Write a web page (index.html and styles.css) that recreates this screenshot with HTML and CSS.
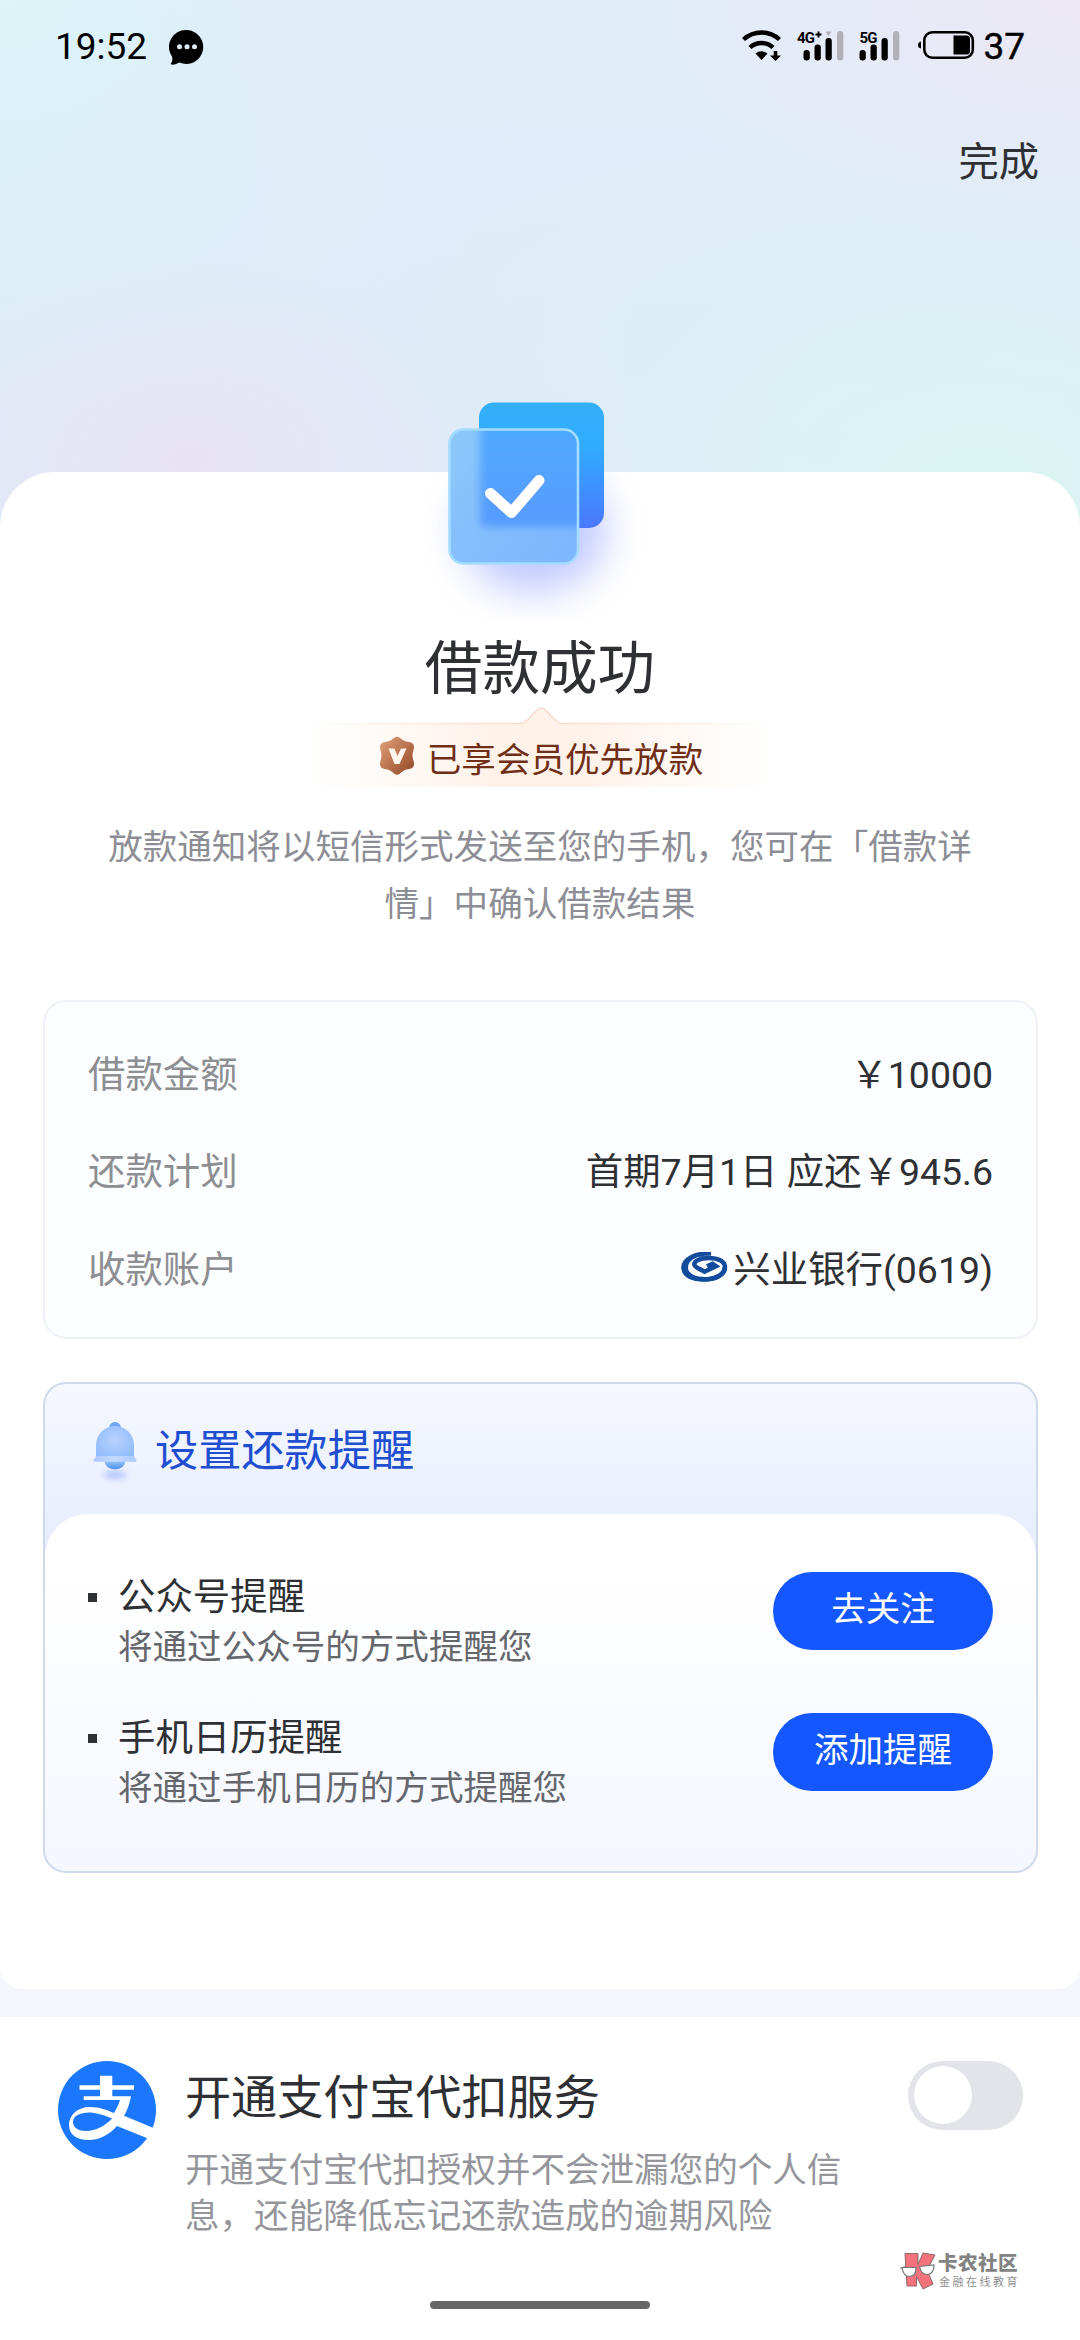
FILE: index.html
```html
<!DOCTYPE html>
<html lang="zh-CN">
<head>
<meta charset="utf-8">
<title>借款成功</title>
<link rel="stylesheet" href="styles.css">
</head>
<body>
<div class="page">
  <header class="status">
    <div class="status-left">
      <span>19:52</span>
      <svg class="chat" width="36" height="37" viewBox="0 0 36 37">
        <path d="M18 1a17 17 0 1 1-7.500 32.600C8 35 4.500 36 2.500 35.500c-.8-.2-.9-1-.4-1.500 1.400-1.500 1.600-4 .9-6.500A17 17 0 0 1 18 1z"/>
        <g fill="#e0edf7"><circle cx="10.500" cy="17.700" r="2.500"/><circle cx="18" cy="17.700" r="2.500"/><circle cx="25.500" cy="17.700" r="2.500"/></g>
      </svg>
    </div>
    <div class="status-right">
      <svg class="signals" width="235" height="34" viewBox="0 0 235 34">
        <g fill="none" stroke="#000" stroke-width="4.400">
          <path d="M1.500 9.500a26.500 26.500 0 0 1 36 0"/>
          <path d="M8 17.500a17 17 0 0 1 23 0"/>
        </g>
        <path d="M19.500 30l-6-6.500a9 9 0 0 1 12 0z"/>
        <path d="M31.700 21h3.600v4.500h3.700l-5.500 5.500-5.500-5.500h3.700z"/>
        <text x="55" y="12.500" class="net">4G</text><path d="M73.500 4.500h6M76.500 1.500v6" stroke="#000" stroke-width="1.900"/>
        <path d="M83.500 1.500h6l-3 4.500z" fill="#b0b0b9"/>
        <g><rect x="61.500" y="20" width="6.300" height="10.500" rx="3"/><rect x="72.500" y="14.500" width="6.300" height="16" rx="3"/><rect x="83.500" y="8" width="6.300" height="22.500" rx="3"/><rect x="95" y="1" width="6.300" height="29.500" rx="3" fill="#b0b0b9"/></g>
        <text x="117.500" y="12.500" class="net">5G</text>
        <g><rect x="117.500" y="20" width="6.300" height="10.500" rx="3"/><rect x="128.500" y="14.500" width="6.300" height="16" rx="3"/><rect x="139.500" y="8" width="6.300" height="22.500" rx="3"/><rect x="151" y="1" width="6.300" height="29.500" rx="3" fill="#b0b0b9"/></g>
        <path d="M179 11.500v7q-3-.5-3-3.500t3-3.500z"/>
        <rect x="182.300" y="2.300" width="48.500" height="25.400" rx="8" fill="none" stroke="#000" stroke-width="2.600"/>
        <path d="M211.500 5.500h13q3.500 0 3.500 3.500v12q0 3.500-3.500 3.500h-13z"/>
      </svg>
      <span class="battery">37</span>
    </div>
  </header>
  <nav class="nav"><a class="done">完成</a></nav>

  <main class="sheet">
    <svg class="hero" width="280" height="240" viewBox="0 0 280 240">
      <defs>
        <linearGradient id="back" x1="0" y1="0" x2="0" y2="1"><stop offset="0" stop-color="#35aff9"/><stop offset=".35" stop-color="#30acff"/><stop offset=".75" stop-color="#418bff"/><stop offset="1" stop-color="#4a78fc"/></linearGradient>
        <linearGradient id="front" x1="0" y1="0" x2="1" y2="1"><stop offset="0" stop-color="#8dc8fa"/><stop offset="1" stop-color="#7db5ff"/></linearGradient>
        <linearGradient id="mix" x1="0" y1="0" x2="0" y2="1"><stop offset="0" stop-color="#4eadff"/><stop offset="1" stop-color="#579bff"/></linearGradient>
        <filter id="soft" x="-50%" y="-50%" width="200%" height="200%"><feGaussianBlur stdDeviation="20"/></filter>
        <filter id="edge" x="-20%" y="-20%" width="140%" height="140%"><feGaussianBlur stdDeviation="4"/></filter>
        <clipPath id="pane"><rect x="49" y="49" width="129" height="134" rx="14"/></clipPath>
        <clipPath id="below"><rect x="0" y="92" width="280" height="148"/></clipPath>
      </defs>
      <g clip-path="url(#below)"><ellipse cx="134" cy="150" rx="72" ry="62" fill="#8c9cff" opacity=".55" filter="url(#soft)"/></g>
      <rect x="79" y="22.500" width="125" height="125.500" rx="15" fill="url(#back)"/>
      <rect x="49" y="49" width="129" height="134" rx="14" fill="url(#front)"/>
      <g clip-path="url(#pane)"><rect x="80" y="20" width="125" height="127" rx="6" fill="url(#mix)" filter="url(#edge)"/></g>
      <rect x="49.500" y="49.500" width="128.500" height="134" rx="14" fill="none" stroke="#a4dcff" stroke-width="2.600"/>
      <path d="M90.500 113.500l21 19 27.500-32" fill="none" stroke="#fff" stroke-width="11" stroke-linecap="round" stroke-linejoin="round"/>
    </svg>
    <h1 class="title">借款成功</h1>
    <div class="vip">
      <svg class="vip-bg" width="480" height="82" viewBox="0 0 480 82">
        <defs>
          <linearGradient id="vf" x1="0" x2="1"><stop offset="0" stop-color="#fff5ee" stop-opacity="0"/><stop offset=".4" stop-color="#fff2e9"/><stop offset=".6" stop-color="#fff2e9"/><stop offset="1" stop-color="#fff5ee" stop-opacity="0"/></linearGradient>
          <linearGradient id="vs" x1="0" x2="1"><stop offset="0" stop-color="#f7dfd0" stop-opacity="0"/><stop offset=".45" stop-color="#f7dccb"/><stop offset=".55" stop-color="#f7dccb"/><stop offset="1" stop-color="#f7dfd0" stop-opacity="0"/></linearGradient>
        </defs>
        <path d="M0 17.500H221C228 17.500 235 2 241.500 2S254 17.500 261 17.500H480V81H0z" fill="url(#vf)"/>
        <path d="M0 17.500H221C228 17.500 235 2 241.500 2S254 17.500 261 17.500H480" fill="none" stroke="url(#vs)" stroke-width="1.500"/>
      </svg>
      <svg class="vip-icon" width="36" height="40" viewBox="0 0 36 40">
        <defs><linearGradient id="bz" x1="0" y1="0" x2="1" y2="1"><stop offset="0" stop-color="#e3a27c"/><stop offset=".5" stop-color="#bb7450"/><stop offset="1" stop-color="#8e4524"/></linearGradient></defs>
        <path d="M15 2Q18-.5 21 2C24 4.500 26 5.500 30 6q4.500.5 5 4.500c.2 3-1.500 5.500-1.500 9s1.700 6 1.500 9q-.5 4-5 4.500c-4 .5-6 2-9 4.500q-3 2.500-6 0c-3-2.500-5-4-9-4.500q-4.500-.5-5-4.500c-.2-3 1.500-5.500 1.500-9S.8 13.500 1 10.500Q1.500 6.500 6 6c4-.5 6-1.500 9-4z" fill="url(#bz)"/>
        <path d="M9.500 12.500h6l3 7.500 3.500-7.500h5.500l-7 15.500h-5z" fill="#fff5ed"/>
      </svg>
      <span class="vip-text">已享会员优先放款</span>
    </div>
    <p class="desc">放款通知将以短信形式发送至您的手机，您可在「借款详情」中确认借款结果</p>

    <section class="details">
      <div class="row"><span class="label">借款金额</span><span class="value">￥10000</span></div>
      <div class="row"><span class="label">还款计划</span><span class="value">首期7月1日 应还￥945.6</span></div>
      <div class="row"><span class="label">收款账户</span><span class="value">
        <svg class="bank" width="47" height="31" viewBox="0 0 47 31">
          <path d="M30 1.200C14 1.200 2.600 7 2.600 15.500S12 27.500 23.500 27.500 44 22.500 44 15C44 9 36.500 5.900 28 5.900c-9 0-15.500 3.100-14.500 7.100.8 3 5.500 3.700 10 6.700L35 14.200l-3.500-2.400-5.500 2.400" fill="none" stroke="#134c9d" stroke-width="4.500"/>
          <path d="M30 0C14-.8.600 6 .600 15.500.600 23.500 10 29.500 23.500 29.500S46 23.500 46 15.500L41.500 15c0 6-8 10-18 10S7 21 7 15.500C7 8 17 3 30 1.500z" fill="#134c9d"/>
        </svg>兴业银行(0619)</span></div>
    </section>

    <section class="remind">
      <header class="remind-head">
        <svg class="bell" width="46" height="64" viewBox="0 0 46 64">
          <defs>
            <radialGradient id="bl" cx=".5" cy=".45" r=".65"><stop offset="0" stop-color="#b9d2fe"/><stop offset="1" stop-color="#8fbbfb"/></radialGradient>
            <linearGradient id="cl" x1="0" y1="0" x2="0" y2="1"><stop offset=".4" stop-color="#a9d0fb"/><stop offset="1" stop-color="#4a90ea"/></linearGradient>
            <linearGradient id="rim" x1="0" y1="0" x2="1" y2="0"><stop offset="0" stop-color="#a9c8fc"/><stop offset=".5" stop-color="#c6dafe"/><stop offset="1" stop-color="#a9c8fc"/></linearGradient>
            <filter id="bs" x="-50%" y="-100%" width="200%" height="300%"><feGaussianBlur stdDeviation="3"/></filter>
          </defs>
          <ellipse cx="23" cy="55" rx="12" ry="3.500" fill="#a9bdfd" filter="url(#bs)"/>
          <circle cx="23" cy="8" r="6" fill="#6fa5f3"/>
          <ellipse cx="23" cy="41" rx="10.500" ry="8.500" fill="url(#cl)"/>
          <path d="M4 25a19 19 0 0 1 38 0v13H4z" fill="url(#bl)"/>
          <path d="M4 36h38q.5 2.500 2.200 3.500 1 2-1.200 2.300H3Q.8 41.500 1.800 39.500 3.500 38.500 4 36z" fill="url(#rim)"/>
        </svg>
        <h2>设置还款提醒</h2>
      </header>
      <div class="remind-body">
        <div class="item">
          <i class="dot"></i>
          <div class="item-text"><h3>公众号提醒</h3><p>将通过公众号的方式提醒您</p></div>
          <button class="btn">去关注</button>
        </div>
        <div class="item">
          <i class="dot"></i>
          <div class="item-text"><h3>手机日历提醒</h3><p>将通过手机日历的方式提醒您</p></div>
          <button class="btn">添加提醒</button>
        </div>
      </div>
    </section>
  </main>

  <footer class="alipay">
    <svg class="alipay-logo" width="98" height="98" viewBox="0 0 98 98">
      <circle cx="49" cy="49" r="49" fill="#1b78fe"/>
      <path d="M42 14.700h12.300v9.600H76v4.400H54.300v6.500H73C71.500 43 69 50 66 54.700L95.500 67 90 77.500 59 65C50 75 40 79 31 79 18 79 11 73 11 64 11 54 20 46 32 46c9 0 17 3 24 6 3-5 5-9.500 6-13H25.700v-3.800H42v-6.500H21.500v-4.400H42zM54 57.500C46 54 37 51.500 31 51.500c-9 0-16 3.500-16 9.500S21 70 28 70c10 0 19-5 26-12.500z" fill="#fff" fill-rule="evenodd"/>
    </svg>
    <div class="alipay-text">
      <h2>开通支付宝代扣服务</h2>
      <p>开通支付宝代扣授权并不会泄漏您的个人信息，还能降低忘记还款造成的逾期风险</p>
    </div>
    <span class="switch"><i class="knob"></i></span>
  </footer>

  <div class="watermark">
    <svg width="36" height="38" viewBox="0 0 36 38">
      <g fill="#f4727c" stroke="#8a6a6c" stroke-width="1">
        <path d="M5 1.500h13v11L23 1l12 2-8 15 6 14-10 5-6.500-12.500V34H7z"/>
      </g>
      <g fill="#fff" stroke="#777" stroke-width="1.200"><path d="M2 15.500l14 0c0 6-2 9-6.500 9S3 21.500 2 15.500zM19.500 14.500L34 13c0 5.500-2 9-6.500 9.500-4.500 0-7-3-8-8z"/></g>
      <path d="M.5 16.500l5-2" stroke="#777" stroke-width="1.200"/>
    </svg>
    <div class="wm-text"><b>卡农社区</b><span>金融在线教育</span></div>
  </div>
  <div class="homebar"></div>
</div>
</body>
</html>
```

FILE: styles.css
```css
* { box-sizing: border-box; margin: 0; padding: 0; }

body {
  width: 1080px;
  font-family: Roboto, "Noto Sans CJK SC", sans-serif;
  color: #2e3033;
}

h1, h2, h3 { font-weight: 400; }
svg { display: block; flex: none; }

.page {
  position: relative;
  display: flex;
  flex-direction: column;
  height: 2340px;
  overflow: hidden;
  background:
    radial-gradient(ellipse 260px 180px at 0 0, #dcf5f8, rgba(220, 245, 248, 0)) 0 0 / 1080px 600px no-repeat,
    radial-gradient(ellipse 460px 250px at 100% 0, #ece8f4, rgba(236, 232, 244, 0)) 0 0 / 1080px 600px no-repeat,
    radial-gradient(ellipse 300px 200px at 190px 460px, #e8e3f4, rgba(232, 227, 244, 0)) 0 0 / 1080px 600px no-repeat,
    radial-gradient(ellipse 400px 240px at 980px 490px, #daf6f1, rgba(218, 246, 241, 0)) 0 0 / 1080px 600px no-repeat,
    radial-gradient(ellipse 420px 280px at 0 170px, #dbeff8, rgba(219, 239, 248, 0)) 0 0 / 1080px 600px no-repeat,
    radial-gradient(ellipse 560px 240px at 900px 350px, #dceff7, rgba(220, 239, 247, 0)) 0 0 / 1080px 600px no-repeat,
    linear-gradient(#e0edf9, #dfeaf8) 0 0 / 1080px 600px no-repeat,
    #f4f6fb;
}

.status {
  display: flex;
  justify-content: space-between;
  align-items: center;
  height: 92px;
  padding: 2px 55px 0 55px;
  font-size: 37px;
  line-height: 44px;
  color: #000;
}
.status-left, .status-right { display: flex; align-items: center; }
.chat { margin-left: 22px; }
.signals { margin-right: 6px; }
.battery { -webkit-text-stroke: 0.4px #000; }
.net { font: 700 15px Roboto, sans-serif; letter-spacing: -0.8px; }

.nav {
  display: flex;
  align-items: center;
  justify-content: flex-end;
  height: 141px;
  padding-right: 41px;
}
.done { font-size: 40.300px; line-height: 50px; }

.sheet {
  display: flex;
  flex-direction: column;
  align-items: center;
  height: 1517px;
  margin-top: 239px;
  flex: none;
  border-radius: 55px 55px 22px 22px;
  background: #fff;
}
.hero { margin-top: -92px; }
.title {
  height: 86px;
  padding-top: 13px;
  font-size: 57.600px;
  line-height: 74px;
}

.vip {
  position: relative;
  display: flex;
  align-items: center;
  justify-content: center;
  height: 81px;
  width: 480px;
  padding: 26px 0 0 2px;
}
.vip-bg { position: absolute; left: 0; top: 0; }
.vip-icon { position: relative; margin: -7px 12px 0 0; }
.vip-text {
  position: relative;
  font-size: 34.560px;
  line-height: 46px;
  color: #702e17;
}

.desc {
  width: 866px;
  margin-top: 32px;
  font-size: 34.560px;
  line-height: 57px;
  text-align: center;
  color: #8d8e95;
}

.details {
  width: 995px;
  height: 339px;
  margin: 67px 0 0 1px;
  padding: 24px 43px 0;
  border: 2px solid #eef1f8;
  border-radius: 23px;
  background: #fcfdff;
}
.row {
  display: flex;
  justify-content: space-between;
  align-items: center;
  height: 97.500px;
  font-size: 37.440px;
  line-height: 50px;
}
.label { color: #8d8e92; }
.value { display: flex; align-items: center; }
.bank { margin: -4px 5px 0 0; }

.remind {
  width: 995px;
  height: 491px;
  margin: 43px 0 0 1px;
  border: 2px solid #cedaeb;
  border-radius: 23px;
  overflow: hidden;
  background: linear-gradient(#f5f8fe, #e6ecfe 180px);
}
.remind-head {
  display: flex;
  align-items: center;
  gap: 17px;
  height: 130px;
  padding: 5px 0 0 47px;
}
.remind-head h2 {
  font-size: 43.200px;
  line-height: 56px;
  color: #1f4fd0;
}
.remind-body {
  display: flex;
  flex-direction: column;
  gap: 41px;
  height: 357px;
  padding: 58px 43px 0;
  border-radius: 43px 43px 0 0;
  background: linear-gradient(#fff 15%, #f4f7fe);
}
.item { display: flex; align-items: flex-start; height: 100px; flex: none; }
.dot { width: 9px; height: 9px; margin: 21px 21px 0 0; background: #2e3033; }
.item-text { flex: 1; }
.item h3 { font-size: 37.440px; line-height: 50px; }
.item p { font-size: 34.560px; line-height: 50px; color: #65676d; }
.btn {
  width: 220px;
  height: 78px;
  padding-bottom: 4px;
  border: 0;
  border-radius: 39px;
  background: #1557ff;
  color: #fff;
  font: 34.560px/44px Roboto, "Noto Sans CJK SC", sans-serif;
}

.alipay {
  display: flex;
  align-items: flex-start;
  flex: 1;
  margin-top: 28px;
  padding: 44px 57px 0 58px;
  background: #fff;
}
.alipay-text { flex: 1; padding: 7px 0 0 29px; }
.alipay-text h2 { font-size: 46.080px; line-height: 60px; }
.alipay-text p {
  width: 660px;
  margin-top: 19px;
  font-size: 34.560px;
  line-height: 46px;
  color: #95969c;
}
.switch {
  flex: none;
  width: 115px;
  height: 69px;
  padding: 5px 6px;
  border-radius: 35px;
  background: #e3e4ea;
}
.knob { display: block; width: 58px; height: 58px; border-radius: 50%; background: #fff; }

.watermark {
  position: absolute;
  left: 900px;
  top: 2252px;
  display: flex;
  gap: 2px;
}
.wm-text { display: flex; flex-direction: column; }
.wm-text b { font: 900 19.500px/24px Roboto, "Noto Sans CJK SC", sans-serif; color: #838383; letter-spacing: .5px; }
.wm-text span { font: 11px/14px Roboto, "Noto Sans CJK SC", sans-serif; color: #8f8f8f; letter-spacing: 2.500px; padding-left: 1px; }

.homebar {
  position: absolute;
  left: 430px;
  top: 2301px;
  width: 220px;
  height: 8px;
  border-radius: 4px;
  background: #666;
}
```
